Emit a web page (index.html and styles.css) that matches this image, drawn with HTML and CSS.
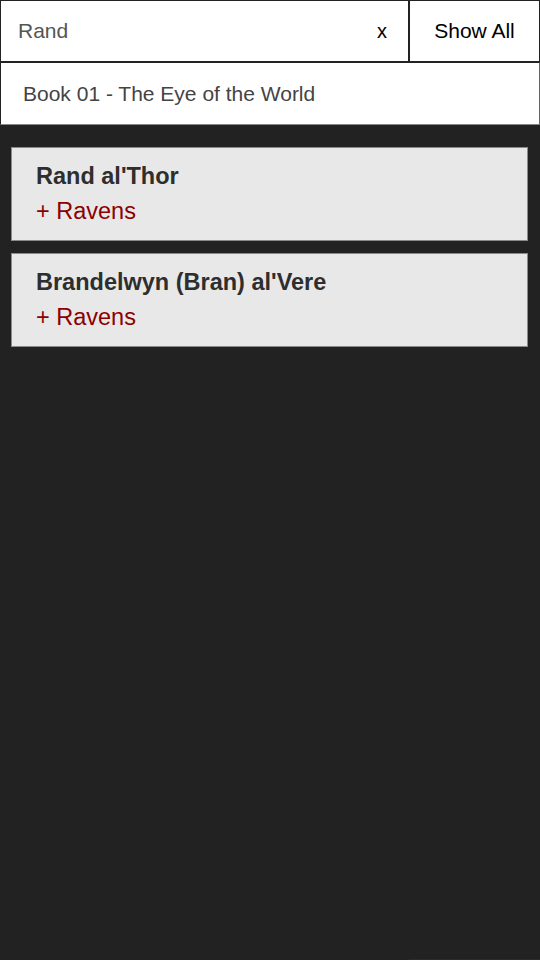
FILE: index.html
```html
<!DOCTYPE html>
<html>
<head>
<meta charset="utf-8">
<link rel="stylesheet" href="styles.css">
</head>
<body>
<div class="top">
  <div class="search">
    <span class="query">Rand</span>
    <span class="clear">x</span>
  </div>
  <div class="show-all">Show All</div>
</div>
<div class="book">Book 01 - The Eye of the World</div>
<div class="list">
  <div class="card">
    <div class="name">Rand al'Thor</div>
    <div class="group">+ Ravens</div>
  </div>
  <div class="card">
    <div class="name">Brandelwyn (Bran) al'Vere</div>
    <div class="group">+ Ravens</div>
  </div>
</div>
<div class="footer-edge"></div>
</body>
</html>
```
FILE: styles.css
```css
html, body {
  margin: 0;
  padding: 0;
  background: #222222;
  font-family: "Liberation Sans", Arial, sans-serif;
  height: 100%;
}
.top {
  display: flex;
  height: 62px;
}
.search {
  flex: 0 0 409px;
  box-sizing: border-box;
  background: #fff;
  border: 1px solid #222;
  display: flex;
  align-items: center;
  justify-content: space-between;
  padding: 0 21px 0 17px;
  font-size: 21px;
}
.query {
  color: #555;
}
.clear {
  color: #000;
  font-size: 20px;
}
.show-all {
  flex: 1;
  box-sizing: border-box;
  background: #fff;
  border: 1px solid #222;
  display: flex;
  align-items: center;
  justify-content: center;
  font-size: 21px;
  color: #000;
}
.book {
  box-sizing: border-box;
  height: 63px;
  background: #fff;
  border: 1px solid #222;
  border-bottom-color: #888;
  border-right-color: #666;
  display: flex;
  align-items: center;
  padding-left: 22px;
  font-size: 21px;
  color: #444;
}
.list {
  display: flex;
  flex-direction: column;
  gap: 12px;
  padding: 22px 12px 0 11px;
}
.card {
  box-sizing: border-box;
  height: 94px;
  background: #e8e8e8;
  border: 1px solid #8a8a8a;
  padding: 13px 24px 0 24px;
}
.name {
  font-weight: bold;
  font-size: 23.5px;
  color: #2e2e2e;
  line-height: 30px;
}
.group {
  font-size: 23.5px;
  color: #8b0000;
  line-height: 30px;
  margin-top: 5px;
}
.footer-edge {
  position: fixed;
  right: 0;
  bottom: 0;
  width: 131px;
  height: 1px;
  background: #2c2c2c;
}
```
